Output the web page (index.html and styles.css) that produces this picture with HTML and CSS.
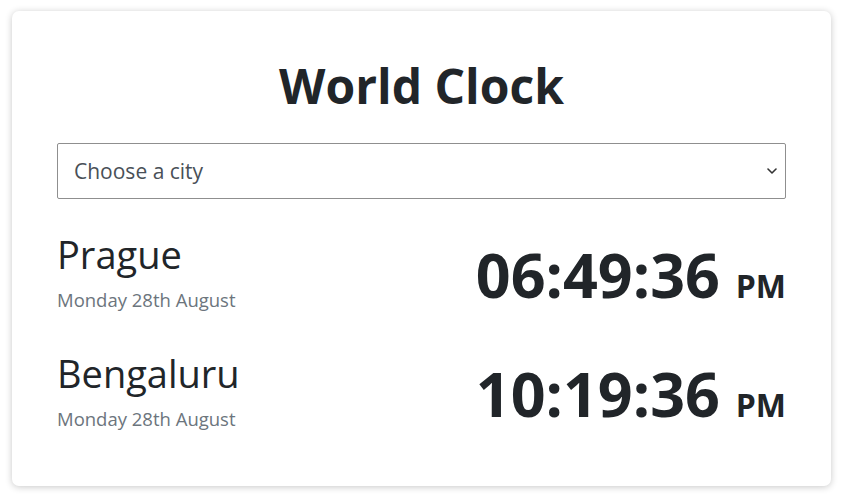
FILE: index.html
```html
<!DOCTYPE html>
<html lang="en">
<head>
<meta charset="utf-8">
<title>World Clock</title>
<link rel="stylesheet" href="styles.css">
</head>
<body>
<main class="card">
  <h1 class="title">World Clock</h1>
  <div class="select-wrap">
    <select class="city-select">
      <option>Choose a city</option>
      <option>Prague</option>
      <option>Bengaluru</option>
    </select>
    <svg class="chevron" width="10" height="6" viewBox="0 0 10 6" aria-hidden="true"><path d="M1 1l4 4 4-4" fill="none" stroke="#333" stroke-width="1.6" stroke-linecap="round" stroke-linejoin="round"/></svg>
  </div>
  <section class="city">
    <div class="city-info">
      <h2 class="city-name">Prague</h2>
      <div class="city-date">Monday 28th August</div>
    </div>
    <div class="city-time">06:49:36 <small class="ampm">PM</small></div>
  </section>
  <section class="city">
    <div class="city-info">
      <h2 class="city-name">Bengaluru</h2>
      <div class="city-date">Monday 28th August</div>
    </div>
    <div class="city-time">10:19:36 <small class="ampm">PM</small></div>
  </section>
</main>
</body>
</html>
```
FILE: styles.css
```css
* { box-sizing: border-box; }
html, body { margin: 0; background: #fff; }
body {
  font-family: "Open Sans", "Noto Sans", sans-serif;
  color: #212529;
  padding: 11px 14px 12px 12px;
}
.card {
  background: #fff;
  border-radius: 7px;
  box-shadow: 0 1px 7px rgba(0,0,0,0.22);
  padding: 45px 45px 55px;
}
.title {
  margin: 0 0 27px;
  text-align: center;
  font-size: 48px;
  line-height: 60px;
  font-weight: 700;
}
.select-wrap { position: relative; }
.city-select {
  display: block;
  width: 100%;
  height: 56px;
  appearance: none;
  -webkit-appearance: none;
  background: #fff;
  border: 1px solid #8f8f8f;
  border-radius: 2px;
  padding: 0 40px 0 16px;
  font-family: inherit;
  font-size: 21px;
  color: #495057;
}
.chevron {
  position: absolute;
  right: 9px;
  top: 25px;
}
.city {
  display: flex;
  justify-content: space-between;
  align-items: flex-end;
  margin-top: 32px;
}
.city + .city { margin-top: 38px; }
.city-name {
  margin: 0;
  font-size: 38px;
  line-height: 46px;
  font-weight: 400;
}
.city-date {
  margin-top: 11px;
  font-size: 18.5px;
  line-height: 24px;
  color: #6c757d;
}
.city-time {
  font-size: 61px;
  line-height: 52px;
  font-weight: 700;
  white-space: nowrap;
}
.ampm {
  font-size: 32px;
  font-weight: 700;
}
```
